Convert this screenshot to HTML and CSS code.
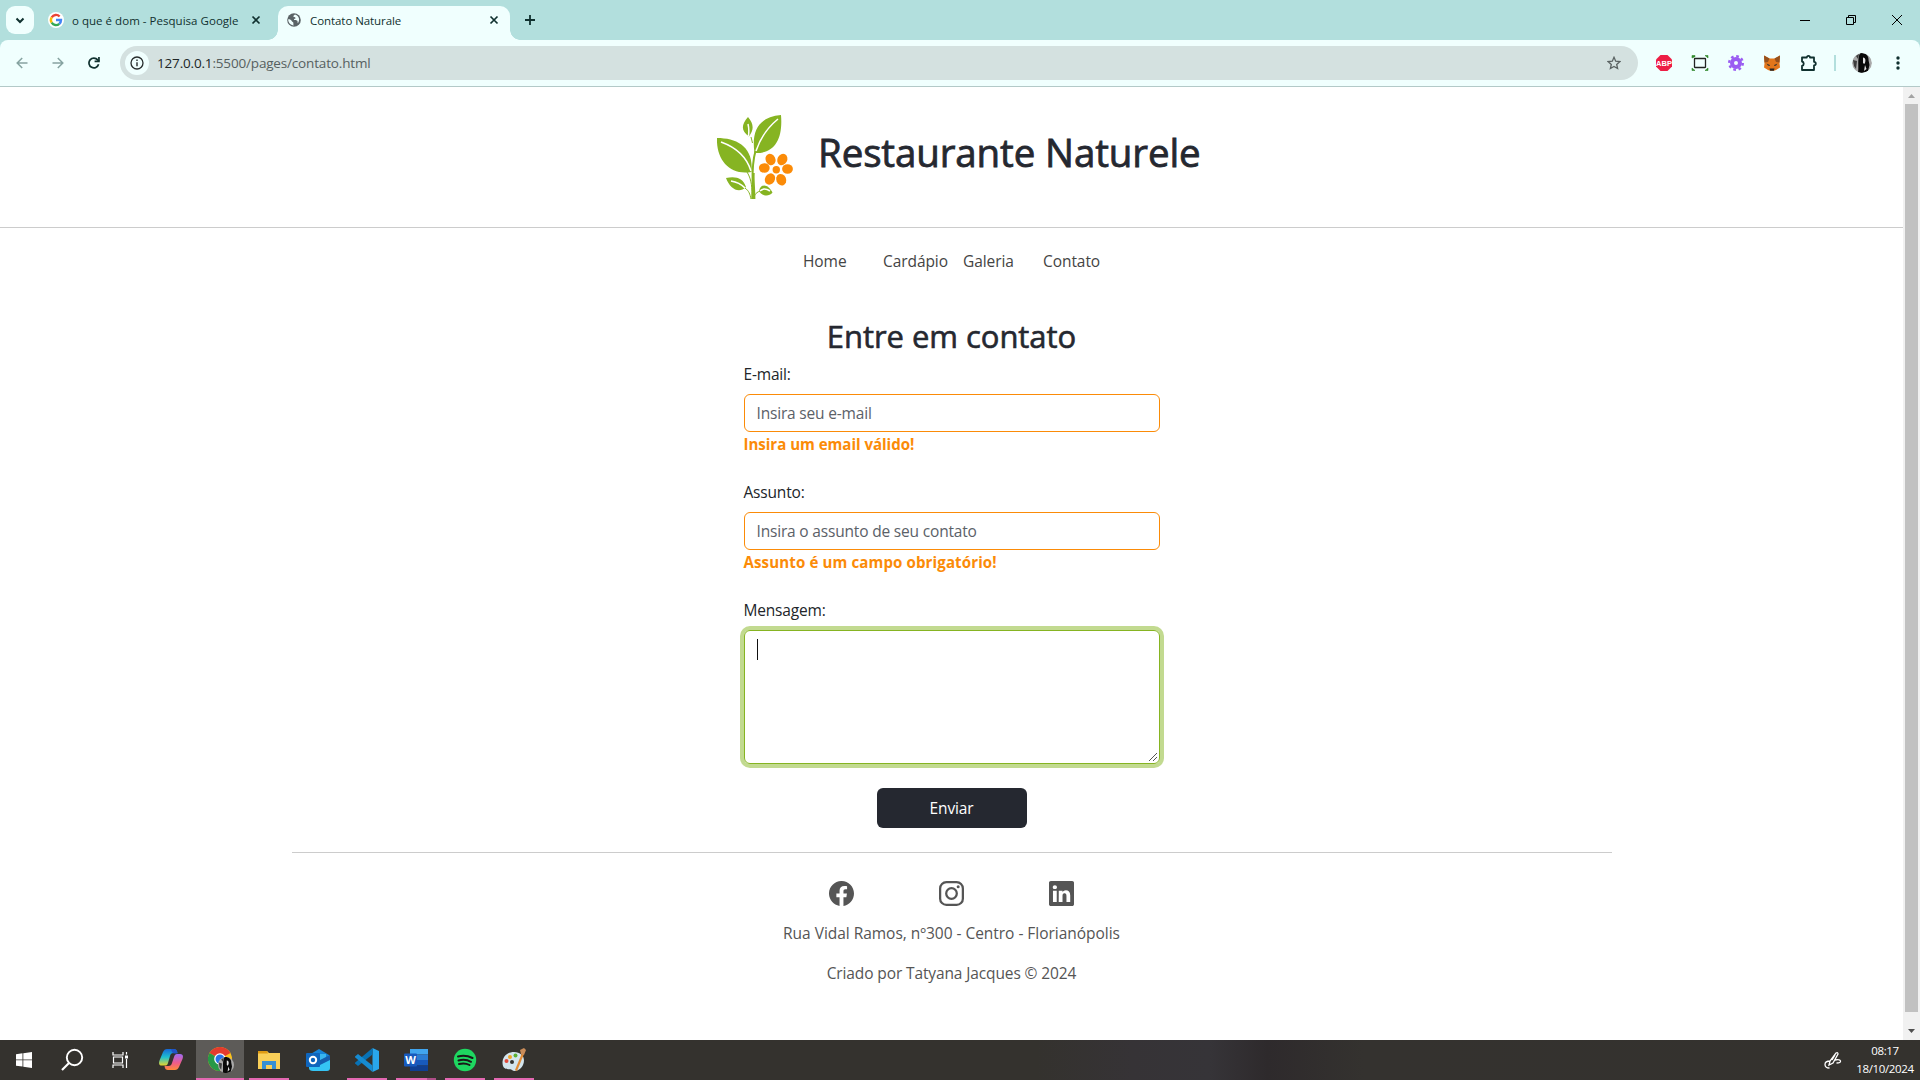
FILE: index.html
```html
<!DOCTYPE html>
<html lang="pt-BR">
<head>
<meta charset="utf-8">
<title>Contato Naturale</title>
<link rel="stylesheet" href="styles.css">
</head>
<body>
<div class="tabstrip">
  <div class="tab-search"><svg width="28" height="28" viewBox="0 0 28 28"><path d="M10.5 12.5l3.5 3.5 3.5-3.5" fill="none" stroke="#10312f" stroke-width="2"/></svg></div>
  <div class="tab tab-idle">
    <svg class="favicon" width="16" height="16" viewBox="0 0 16 16"><circle cx="8" cy="8" r="8" fill="#fff"/><g fill="none" stroke-width="2.4"><path d="M3.7 5.3A5 5 0 0 1 11.6 4.5" stroke="#ea4335"/><path d="M3.7 5.3A5 5 0 0 0 3.7 10.7" stroke="#fbbc05"/><path d="M3.7 10.7A5 5 0 0 0 11.3 11.8" stroke="#34a853"/><path d="M8 8h5A5 5 0 0 1 11.3 11.8" stroke="#4285f4"/></g></svg>
    <span class="tab-title">o que é dom - Pesquisa Google</span>
    <svg class="tab-close" width="10" height="10" viewBox="0 0 10 10"><path d="M1.5 1.5l7 7M8.5 1.5l-7 7" stroke="#10312f" stroke-width="1.7"/></svg>
  </div>
  <div class="tab tab-active">
    <svg class="favicon" width="14" height="14" viewBox="0 0 14 14"><circle cx="7" cy="7" r="6.8" fill="#5b6366"/><path d="M1.2 6.3c2 0 3 .5 3.5 1.6.4 1 1.6.7 1.7 2 0 1-.2 1.7.4 2.500C3.500 12.300 1 9.500 1.200 6.300zM8 1.500c-.9.9-1.900 1.200-1.500 2.300.4.900 1.900.2 2.100 1.200.2 1-1.800.6-1.600 1.700.2.900 2.100.2 3 .9.800.7.600 1.700.7 2.700C12.800 8.200 13 3 8 1.500z" fill="#f0fffe"/></svg>
    <span class="tab-title">Contato Naturale</span>
    <svg class="tab-close" width="10" height="10" viewBox="0 0 10 10"><path d="M1.500 1.500l7 7M8.500 1.500l-7 7" stroke="#10312f" stroke-width="1.700"/></svg>
  </div>
  <svg class="new-tab" width="12" height="12" viewBox="0 0 12 12"><path d="M6 1v10M1 6h10" stroke="#10312f" stroke-width="1.800"/></svg>
  <div class="win-buttons">
    <svg width="10" height="10" viewBox="0 0 10 10"><path d="M0 5.500h10" stroke="#000"/></svg>
    <svg width="10" height="10" viewBox="0 0 10 10"><path d="M.5 2.500h7v7h-7zM2.500 2.500v-2h7v7h-2" fill="none" stroke="#000"/></svg>
    <svg width="10" height="10" viewBox="0 0 10 10"><path d="M0 0l10 10M10 0L0 10" stroke="#000"/></svg>
  </div>
</div>
<div class="toolbar-back"><div class="toolbar">
  <div class="nav-buttons">
    <svg width="12" height="12" viewBox="0 0 12 12"><path d="M11.500 6H1.500M6.200 1L1.200 6l5 5" fill="none" stroke="#86a3a1" stroke-width="1.500"/></svg>
    <svg width="12" height="12" viewBox="0 0 12 12"><path d="M.5 6h10M5.800 1l5 5-5 5" fill="none" stroke="#86a3a1" stroke-width="1.500"/></svg>
    <svg width="12" height="12" viewBox="0 0 12 12"><path d="M10.600 7.300A4.900 4.900 0 1 1 9.700 2.900L11 4.200" fill="none" stroke="#10312f" stroke-width="1.700"/><path d="M11.800 0v5.200H6.600V3.600h3.500V0z" fill="#10312f"/></svg>
  </div>
  <div class="omnibox">
    <div class="site-info"><svg width="14" height="14" viewBox="0 0 14 14"><circle cx="7" cy="7" r="6" fill="none" stroke="#272d2d" stroke-width="1.300"/><path d="M7 6.200v4M7 3.500v1.400" stroke="#272d2d" stroke-width="1.400"/></svg></div>
    <span class="url"><b>127.0.0.1</b>:5500/pages/contato.html</span>
    <svg class="star" width="14" height="14" viewBox="0 0 14 14"><path d="M7 1.300l1.700 3.900 4.100.4-3.100 2.800.9 4.100L7 10.400l-3.600 2.100.9-4.100-3.100-2.800 4.100-.4z" fill="none" stroke="#5b6363" stroke-width="1.300"/></svg>
  </div>
  <div class="extensions">
    <svg width="18" height="18" viewBox="0 0 18 18"><path d="M5.500 1h7L17 5.500v7L12.500 17h-7L1 12.500v-7z" fill="#ed1e45"/><text x="9" y="11.900" text-anchor="middle" class="abp">ABP</text></svg>
    <svg width="18" height="18" viewBox="0 0 18 18"><path d="M1 4V1.500h3v1.200zM14 1.500h3V4l-1.500-1.300zM1 14v2.500h3l-1.500-1.200zM14 16.500h3V14l-1.500 1.300z" fill="#328a2e" stroke="#328a2e" stroke-width=".6"/><rect x="3.500" y="4.500" width="11" height="9" rx=".5" fill="none" stroke="#222" stroke-width="1.300"/></svg>
    <svg width="18" height="18" viewBox="0 0 18 18"><g fill="none" stroke="#9a5cf2"><circle cx="9" cy="9" r="4" stroke-width="4"/><circle cx="9" cy="9" r="6.800" stroke-width="2.400" stroke-dasharray="2.670 2.670"/></g></svg>
    <svg width="18" height="18" viewBox="0 0 18 18"><path d="M1 1.500l5.500 3h5l5.500-3-.5 8 .5 4-4 2.500-2 .800H7L5 16l-4-2.500.500-4z" fill="#e2761b"/><path d="M1 1.500l5.500 3L5 8l-3.500.500zM17 1.500l-5.500 3L13 8l3.500.500z" fill="#95501d"/><path d="M6.500 14.500h5l-.7 2.200H7.200z" fill="#252525"/><path d="M3.500 9.500L7 11v.8H5zM14.500 9.500L11 11v.8h2z" fill="#3a3530"/></svg>
    <svg width="18" height="18" viewBox="0 0 18 18"><path d="M3 3.500h4.800a1.600 1.600 0 0 1 3.200 0h4v4.300a1.800 1.800 0 0 1 0 3.600V16H3v-4.200a2.200 2.200 0 0 0 0-4.300z" fill="none" stroke="#10312f" stroke-width="1.800" stroke-linejoin="round"/></svg>
  </div>
  <div class="divider"></div>
  <svg class="profile" width="20" height="20" viewBox="0 0 20 20"><use href="#portrait"/></svg>
  <svg class="kebab" width="4" height="16" viewBox="0 0 4 16"><g fill="#10312f"><circle cx="2" cy="3" r="1.700"/><circle cx="2" cy="8" r="1.700"/><circle cx="2" cy="13" r="1.700"/></g></svg>
</div></div>
<div class="viewport">
  <div class="page">
    <header class="brand">
      <svg class="logo" width="76" height="85" viewBox="0 0 76 85">
        <g fill="#86b422"><path d="M0 23C20 23 37 32 34.500 57 13 61-1 45 0 23zM64 0C43 2 34 14 37.500 38 58 39 66 24 64 0zM31 2c-7 8-7 14 1 19.500C37 15 37 9 31 2zM9 63c10-2 17 0 20 9C22 79 13 74 9 63zM42 76c2-9 10-6 13.500 1.500C51 83 44 80 42 76z"/></g>
        <g fill="none" stroke="#fff"><path d="M4 27C18 32 29 40 34 56M61 4C50 13 43 24 39 36M31 9c1 4 1 8 .5 12" stroke-width="1.500"/><path d="M14 66c6 1 10 3 14 7M43 76c3-3 7-2 10 0" stroke-width="1.700"/></g>
        <g fill="none" stroke="#86b422"><path d="M35.500 84c1-18-2-31 3-48" stroke-width="2"/><path d="M37.200 84c0-10-1.200-18-.7-26" stroke-width="2.400"/><path d="M34 22l1.500 6M30 57c5 8 5 16 5 27M28 73c4 3 5 6 6 11M43 76c-5 2-6 5-6 8" stroke-width="1"/></g>
        <g fill="#fb8b08"><ellipse cx="53.500" cy="44.500" rx="4.900" ry="5.900" transform="rotate(-25 53.500 44.500)"/><ellipse cx="65.300" cy="44.500" rx="4.900" ry="5.900" transform="rotate(28 65.300 44.500)"/><ellipse cx="47.300" cy="53" rx="5.400" ry="4.800"/><ellipse cx="70.500" cy="54" rx="5.400" ry="4.800"/><ellipse cx="53" cy="64" rx="4.900" ry="5.900" transform="rotate(30 53 64)"/><ellipse cx="64.200" cy="64.700" rx="4.900" ry="5.900" transform="rotate(-22 64.200 64.700)"/><circle cx="59.300" cy="54.700" r="3.700"/></g>
      </svg>
      <h1>Restaurante Naturele</h1>
    </header>
    <nav class="menu"><a>Home</a><a>Cardápio</a><a>Galeria</a><a>Contato</a></nav>
    <main class="contact">
      <h2>Entre em contato</h2>
      <form class="form">
        <label>E-mail:</label>
        <div class="field">Insira seu e-mail</div>
        <strong>Insira um email válido!</strong>
        <label>Assunto:</label>
        <div class="field">Insira o assunto de seu contato</div>
        <strong class="wide">Assunto é um campo obrigatório!</strong>
        <label>Mensagem:</label>
        <div class="message"><i class="caret"></i><svg class="grip" width="10" height="10" viewBox="0 0 10 10"><path d="M1 9L9 1M5 9l4-4" stroke="#555" stroke-width="1"/></svg></div>
        <div class="submit"><span>Enviar</span></div>
      </form>
    </main>
    <footer class="footer">
      <div class="social">
        <svg width="25" height="25" viewBox="0 0 16 16"><path d="M16 8.049c0-4.446-3.582-8.050-8-8.050C3.580 0-.002 3.603-.002 8.050c0 4.017 2.926 7.347 6.750 7.951v-5.625h-2.030V8.050H6.750V6.275c0-2.017 1.195-3.131 3.022-3.131.876 0 1.791.157 1.791.157v1.980h-1.009c-.993 0-1.303.621-1.303 1.258v1.510h2.218l-.354 2.326H9.250V16c3.824-.604 6.750-3.934 6.750-7.951"/></svg>
        <svg width="25" height="25" viewBox="0 0 16 16"><g fill="none" stroke="#555"><rect x=".72" y=".72" width="14.560" height="14.560" rx="4" stroke-width="1.440"/><circle cx="8" cy="8" r="3.400" stroke-width="1.440"/></g><circle cx="12.270" cy="3.730" r=".96"/></svg>
        <svg width="25" height="25" viewBox="0 0 16 16"><path d="M0 1.146C0 .513.526 0 1.175 0h13.650C15.474 0 16 .513 16 1.146v13.708c0 .633-.526 1.146-1.175 1.146H1.175C.526 16 0 15.487 0 14.854zm4.943 12.248V6.169H2.542v7.225zm-1.200-8.212c.837 0 1.358-.554 1.358-1.248-.015-.709-.520-1.248-1.342-1.248S2.400 3.225 2.400 3.934c0 .694.521 1.248 1.327 1.248zm4.908 8.212V9.359c0-.216.016-.432.080-.586.173-.431.568-.878 1.232-.878.869 0 1.216.662 1.216 1.634v3.865h2.401V9.250c0-2.220-1.184-3.252-2.764-3.252-1.274 0-1.845.700-2.165 1.193v.025h-.016l.016-.025V6.169h-2.400c.030.678 0 7.225 0 7.225z"/></svg>
      </div>
      <p class="addr">Rua Vidal Ramos, nº300 - Centro - Florianópolis</p>
      <p class="credit">Criado por Tatyana Jacques © 2024</p>
    </footer>
  </div>
  <div class="scrollbar">
    <svg width="17" height="17" viewBox="0 0 17 17"><path d="M5 11l3.500-4 3.500 4z" fill="#a3a3a3"/></svg>
    <div class="thumb"></div>
    <svg width="17" height="17" viewBox="0 0 17 17"><path d="M5 6l3.500 4L12 6z" fill="#505050"/></svg>
  </div>
</div>
<div class="taskbar">
  <div class="task sys"><svg width="16" height="16" viewBox="0 0 16 16"><path d="M0 2.300L6.500 1.300v6.200H0zM7.300 1.200L16 0v7.500H7.300zM0 8.300h6.500v6.300L0 13.700zM7.300 8.300H16V16l-8.700-1.300z" fill="#fff"/></svg></div>
  <div class="task sys"><svg width="24" height="24" viewBox="0 0 24 24"><circle cx="14.500" cy="9.500" r="7.700" fill="none" stroke="#fff" stroke-width="1.900"/><path d="M9 15l-7 7" stroke="#fff" stroke-width="2.200"/></svg></div>
  <div class="task sys"><svg width="18" height="18" viewBox="0 0 18 18"><path d="M2 1v3h10V1M2 17v-3h10v3M2.500 6h9v6h-9zM15.500 1v2.500M15.500 8v9" fill="none" stroke="#fff" stroke-width="1.200"/><path d="M14 4.500h3v3h-3z" fill="#fff"/></svg></div>
  <div class="task copilot"><svg width="24" height="24" viewBox="0 0 24 24"><defs><linearGradient id="ca" x2="0" y2="1"><stop stop-color="#1768d8"/><stop offset=".5" stop-color="#1ec0d0"/><stop offset="1" stop-color="#e8d52d"/></linearGradient><linearGradient id="cb" x2="0" y2="1"><stop stop-color="#9e6bf5"/><stop offset=".55" stop-color="#ee5b8b"/><stop offset="1" stop-color="#ff8a38"/></linearGradient></defs><path d="M8 1h7c2 0 3 1 3.500 4h-4c-2 0-3 1-3.500 3L9 15c-.5 2-1.500 2.500-3 2.500H3c-3 0-3.500-2-2.500-5L4 4c1-2 2-3 4-3z" fill="url(#ca)"/><path d="M18 6h3c3 0 3.500 2 2.500 5l-3.500 8c-1 2-2 3-4 3H9c-2 0-3-1-3.500-4h4c2 0 3-1 3.500-3l2-6c.5-2 1.500-3 3-3z" fill="url(#cb)"/><path d="M12 1h3c2 0 3 1 3.500 4.500H15c-1 0-2-1-3-4.500z" fill="#2154c7"/></svg></div>
  <div class="task open current"><svg width="26" height="26" viewBox="0 0 26 26"><circle cx="12" cy="12" r="12" fill="#fbc21c"/><path d="M12 12L1.600 6A12 12 0 0 1 22.400 6z" fill="#e33b2e"/><path d="M12 12L1.600 6A12 12 0 0 0 12 24l5-9z" fill="#279847"/><circle cx="12" cy="12" r="5.800" fill="#fff"/><circle cx="12" cy="12" r="4.500" fill="#2773e8"/><svg x="10" y="10" width="16" height="16" viewBox="0 0 20 20"><g id="portrait"><circle cx="10" cy="10" r="10" fill="#a9a9a9"/><path d="M8 .2C13-.6 17 3 16.500 7l1 5-1.500 6c-4 2-8 2.500-10 1.500C7 14 5 6 8 .2z" fill="#090909"/><path d="M11 4.500c3 0 3 4.500 1.200 6.500L11 10zM13 12l1.500 4-2.500 2z" fill="#e2e2e2"/><path d="M1 7l4 1-1 8-2-3zM4 3l3-2-1 5z" fill="#3d3d3d"/></g></svg></svg></div>
  <div class="task open"><svg width="22" height="20" viewBox="0 0 22 20"><path d="M0 1h9l2 2h11v16H0z" fill="#f9cf58"/><path d="M0 1h9l1 2.500H0z" fill="#df9b13"/><path d="M4 11h14v8h-4v-4H8v4H4z" fill="#368fd4"/></svg></div>
  <div class="task"><svg width="24" height="24" viewBox="0 0 24 24"><path d="M3 7l10-6 10 6v6H3z" fill="#1683d8"/><path d="M6 6h14v8H6z" fill="#38b5f0"/><path d="M3 15l21-7v12q0 3-3 3H7q-4 0-4-3z" fill="#35c4f4"/><path d="M12 13l12-6v5L14 17z" fill="#155cad"/><rect y="5" width="14" height="14" rx="1" fill="#0f66bd"/><circle cx="7" cy="12" r="3.200" fill="none" stroke="#fff" stroke-width="2"/></svg></div>
  <div class="task open"><svg width="24" height="24" viewBox="0 0 24 24"><path d="M17.500 0L24 3v18l-6.500 3z" fill="#29a7ec"/><path d="M17.500 0v6.500L3 18l-3-2.500v-.8z" fill="#0872b5"/><path d="M17.500 24v-6.500L3 6 0 8.500v.8z" fill="#168bd1"/></svg></div>
  <div class="task open split"><svg width="24" height="22" viewBox="0 0 24 22"><path d="M6 0h18v5.500H6z" fill="#41a5ee"/><path d="M6 5.500h18V11H6z" fill="#2b7cd3"/><path d="M6 11h18v5.500H6z" fill="#185abd"/><path d="M6 16.500h18V22H6z" fill="#103f91"/><rect y="4.500" width="13" height="13" rx="1" fill="#185abd"/><text x="6.500" y="14.500" text-anchor="middle" class="word">W</text></svg></div>
  <div class="task open"><svg width="24" height="24" viewBox="0 0 24 24"><circle cx="12" cy="12" r="11.200" fill="#1ed760"/><path d="M5 8.500q7.500-2 14.500 1.500M5.500 12.500q7-1.800 12.500 1.300M6 16q6-1.500 10.500 1" fill="none" stroke="#191919" stroke-width="2" stroke-linecap="round"/></svg></div>
  <div class="task open"><svg width="24" height="24" viewBox="0 0 24 24"><path d="M12 4C3 4-1 12 1 18c2 5 7 2 9 4s8 1 11-5c3-7-1-13-9-13z" fill="#d3e5ee"/><circle cx="10" cy="14" r="2" fill="#35332f"/><circle cx="4.500" cy="13" r="2" fill="#e04a3c"/><circle cx="8" cy="9" r="2" fill="#f0a426"/><circle cx="13.500" cy="7.500" r="2" fill="#5bb135"/><path d="M20 5l2 1-7 17-2-1z" fill="#e18b35"/><path d="M18 2l4-2 2 2-2 5-3-1z" fill="#c98c59"/></svg></div>
  <div class="tray"><svg width="18" height="18" viewBox="0 0 18 18"><path d="M5 14l1-4 6-8q2-1 2 1L9 12l-4 2zM6 10q-5 0-5 3.500T5.500 17M11 9q5-1 5.500 1t-4 2M8 9l3-5" fill="none" stroke="#fff" stroke-width="1.300"/></svg>
    <div class="clock"><span>08:17</span><span>18/10/2024</span></div></div>
</div>
</body>
</html>
```
FILE: styles.css
```css
* { box-sizing: border-box; }
body { margin: 0; width: 1920px; height: 1080px; overflow: hidden; display: flex; flex-direction: column; background: #fff; font-family: "Open Sans", "Noto Sans", sans-serif; font-size: 15.5px; letter-spacing: -.07px; color: #212529; }
svg { display: block; flex: none; }
span, h1, h2, p, a { white-space: nowrap; }

.tabstrip { height: 40px; background: #b2dfdd; display: flex; align-items: flex-start; padding-left: 6px; }
.tab-search { width: 28px; height: 28px; margin-top: 6px; border-radius: 9px; background: #f0fffe; }
.tab { display: flex; align-items: center; height: 28px; margin-top: 6px; font-size: 11.5px; color: #10312f; }
.tab-idle { width: 244px; padding-left: 14px; }
.tab-idle .tab-title { margin-left: 8px; width: 166px; letter-spacing: .03px; }
.tab-idle .tab-close { margin-left: 13px; }
.tab-active { position: relative; width: 232px; height: 34px; padding: 0 11px 6px 9px; background: #f0fffe; border-radius: 10px 10px 0 0; }
.tab-active::before, .tab-active::after { content: ""; position: absolute; bottom: 0; width: 10px; height: 10px; }
.tab-active::before { left: -10px; background: radial-gradient(circle at 0 0, transparent 9.5px, #f0fffe 10px); }
.tab-active::after { right: -10px; background: radial-gradient(circle at 100% 0, transparent 9.5px, #f0fffe 10px); }
.tab-active .tab-title { margin-left: 9px; letter-spacing: -.07px; }
.tab-active .tab-close { margin-left: auto; }
.new-tab { margin: 14px 0 0 14px; }
.win-buttons { margin: 15px 18px 0 auto; display: flex; gap: 36px; }

.toolbar-back { height: 47px; background: #b2dfdd; }
.toolbar { height: 47px; background: #f0fffe; border-bottom: 1px solid #b3c9c8; border-radius: 8px 8px 0 0; display: flex; align-items: center; }
.nav-buttons { display: flex; gap: 24px; width: 120px; padding-left: 16px; }
.omnibox { display: flex; align-items: center; width: 1518px; height: 34px; border-radius: 17px; background: #d4e1e0; padding: 0 17px 0 5px; }
.site-info { width: 24px; height: 24px; border-radius: 12px; background: #f0fffe; display: grid; place-items: center; }
.url { margin-left: 8px; font-size: 13.5px; letter-spacing: -.17px; color: #56605f; }
.url b { font-weight: 400; color: #202626; }
.star { margin-left: auto; }
.extensions { display: flex; gap: 18px; margin-left: 17px; }
.abp { font: 700 7.5px "Liberation Sans", sans-serif; letter-spacing: 0; fill: #fff; }
.divider { width: 2px; height: 16px; margin-left: 17px; background: #b2dfdd; }
.profile { margin-left: 16px; border-radius: 50%; }
.kebab { margin-left: 24px; }

.viewport { height: 953px; display: flex; }
.page { width: 1903px; }
.brand { height: 141px; border-bottom: 1px solid #ccc; display: flex; padding: 28px 0 0 717px; }
h1 { margin: 13px 0 0 25px; font-size: 38.5px; font-weight: 500; line-height: 48px; letter-spacing: -.12px; color: #252830; -webkit-text-stroke: .8px #252830; }
.menu { display: grid; grid-template-columns: repeat(4, 80px); margin: 21px 0 0 803px; height: 24px; line-height: 24px; color: #444; }
.contact { width: 416px; margin: 42px 0 0 743.5px; }
h2 { margin: 0; height: 47px; font-size: 31px; line-height: 42px; font-weight: 500; letter-spacing: -.05px; text-align: center; color: #252830; -webkit-text-stroke: .6px #252830; }
.form { display: flex; flex-direction: column; letter-spacing: -.18px; }
label { height: 32px; line-height: 25px; }
.field { height: 38px; padding: 0 12px; line-height: 37px; border: 1px solid #fb8b08; border-radius: 6px; color: #5b6168; }
strong { height: 48px; line-height: 24px; letter-spacing: -.04px; color: #fb8b08; font-size: 15.1px; }
.wide { letter-spacing: .1px; }
.message { position: relative; height: 134px; border: 1px solid #86b422; border-radius: 6px; box-shadow: 0 0 0 4px #c2da90; padding: 8px 12px; }
.caret { display: block; width: 1px; height: 21px; background: #111; }
.grip { position: absolute; right: 1px; bottom: 1px; }
.submit { align-self: center; width: 150px; height: 40px; margin-top: 24px; border-radius: 6px; background: #252830; color: #fff; text-align: center; line-height: 41px; letter-spacing: -.15px; }
.footer { width: 1320px; margin: 24px 0 0 291.5px; border-top: 1px solid #ccc; color: #555; text-align: center; }
.social { display: flex; justify-content: center; gap: 85px; padding-top: 28px; fill: #555; }
p { margin: 0; height: 40px; line-height: 24px; }
.addr { padding-top: 15px; height: 55px; letter-spacing: -.03px; }
.credit { letter-spacing: -.12px; }
.scrollbar { width: 17px; height: 953px; background: #f1f1f1; display: flex; flex-direction: column; justify-content: space-between; }
.thumb { width: 13px; height: 908px; margin: 0 0 11px 2px; background: #c1c1c1; }

.taskbar { height: 40px; display: flex; align-items: stretch; background: linear-gradient(90deg, #34322e 0, #34322e 54%, #363336 59%, #363438 63%, #2e2a2c 66%, #34322f 71%, #34322e 100%); }
.task { position: relative; width: 49px; padding-right: 1px; display: flex; align-items: center; justify-content: center; }
.sys { width: 48px; padding-right: 0; }
.copilot { width: 52px; padding-right: 0; padding-left: 1px; }
.open::after { content: ""; position: absolute; left: 4px; right: 5px; bottom: 0; height: 2px; background: #e368b2; }
.current { width: 48px; margin-right: 1px; padding: 0 0 0 2px; background: #5d5b58; }
.current::after { left: 0; right: 0; }
.split::after { background: linear-gradient(90deg, #e368b2 31px, #ae4e88 31px); }
.word { font: 700 11px "Open Sans", sans-serif; fill: #fff; }
.tray { margin-left: auto; display: flex; align-items: center; color: #fff; }
.clock { display: flex; flex-direction: column; align-items: center; width: 70px; margin: 0 0 0 8px; font-size: 11.5px; line-height: 18px; letter-spacing: -.35px; }
```
